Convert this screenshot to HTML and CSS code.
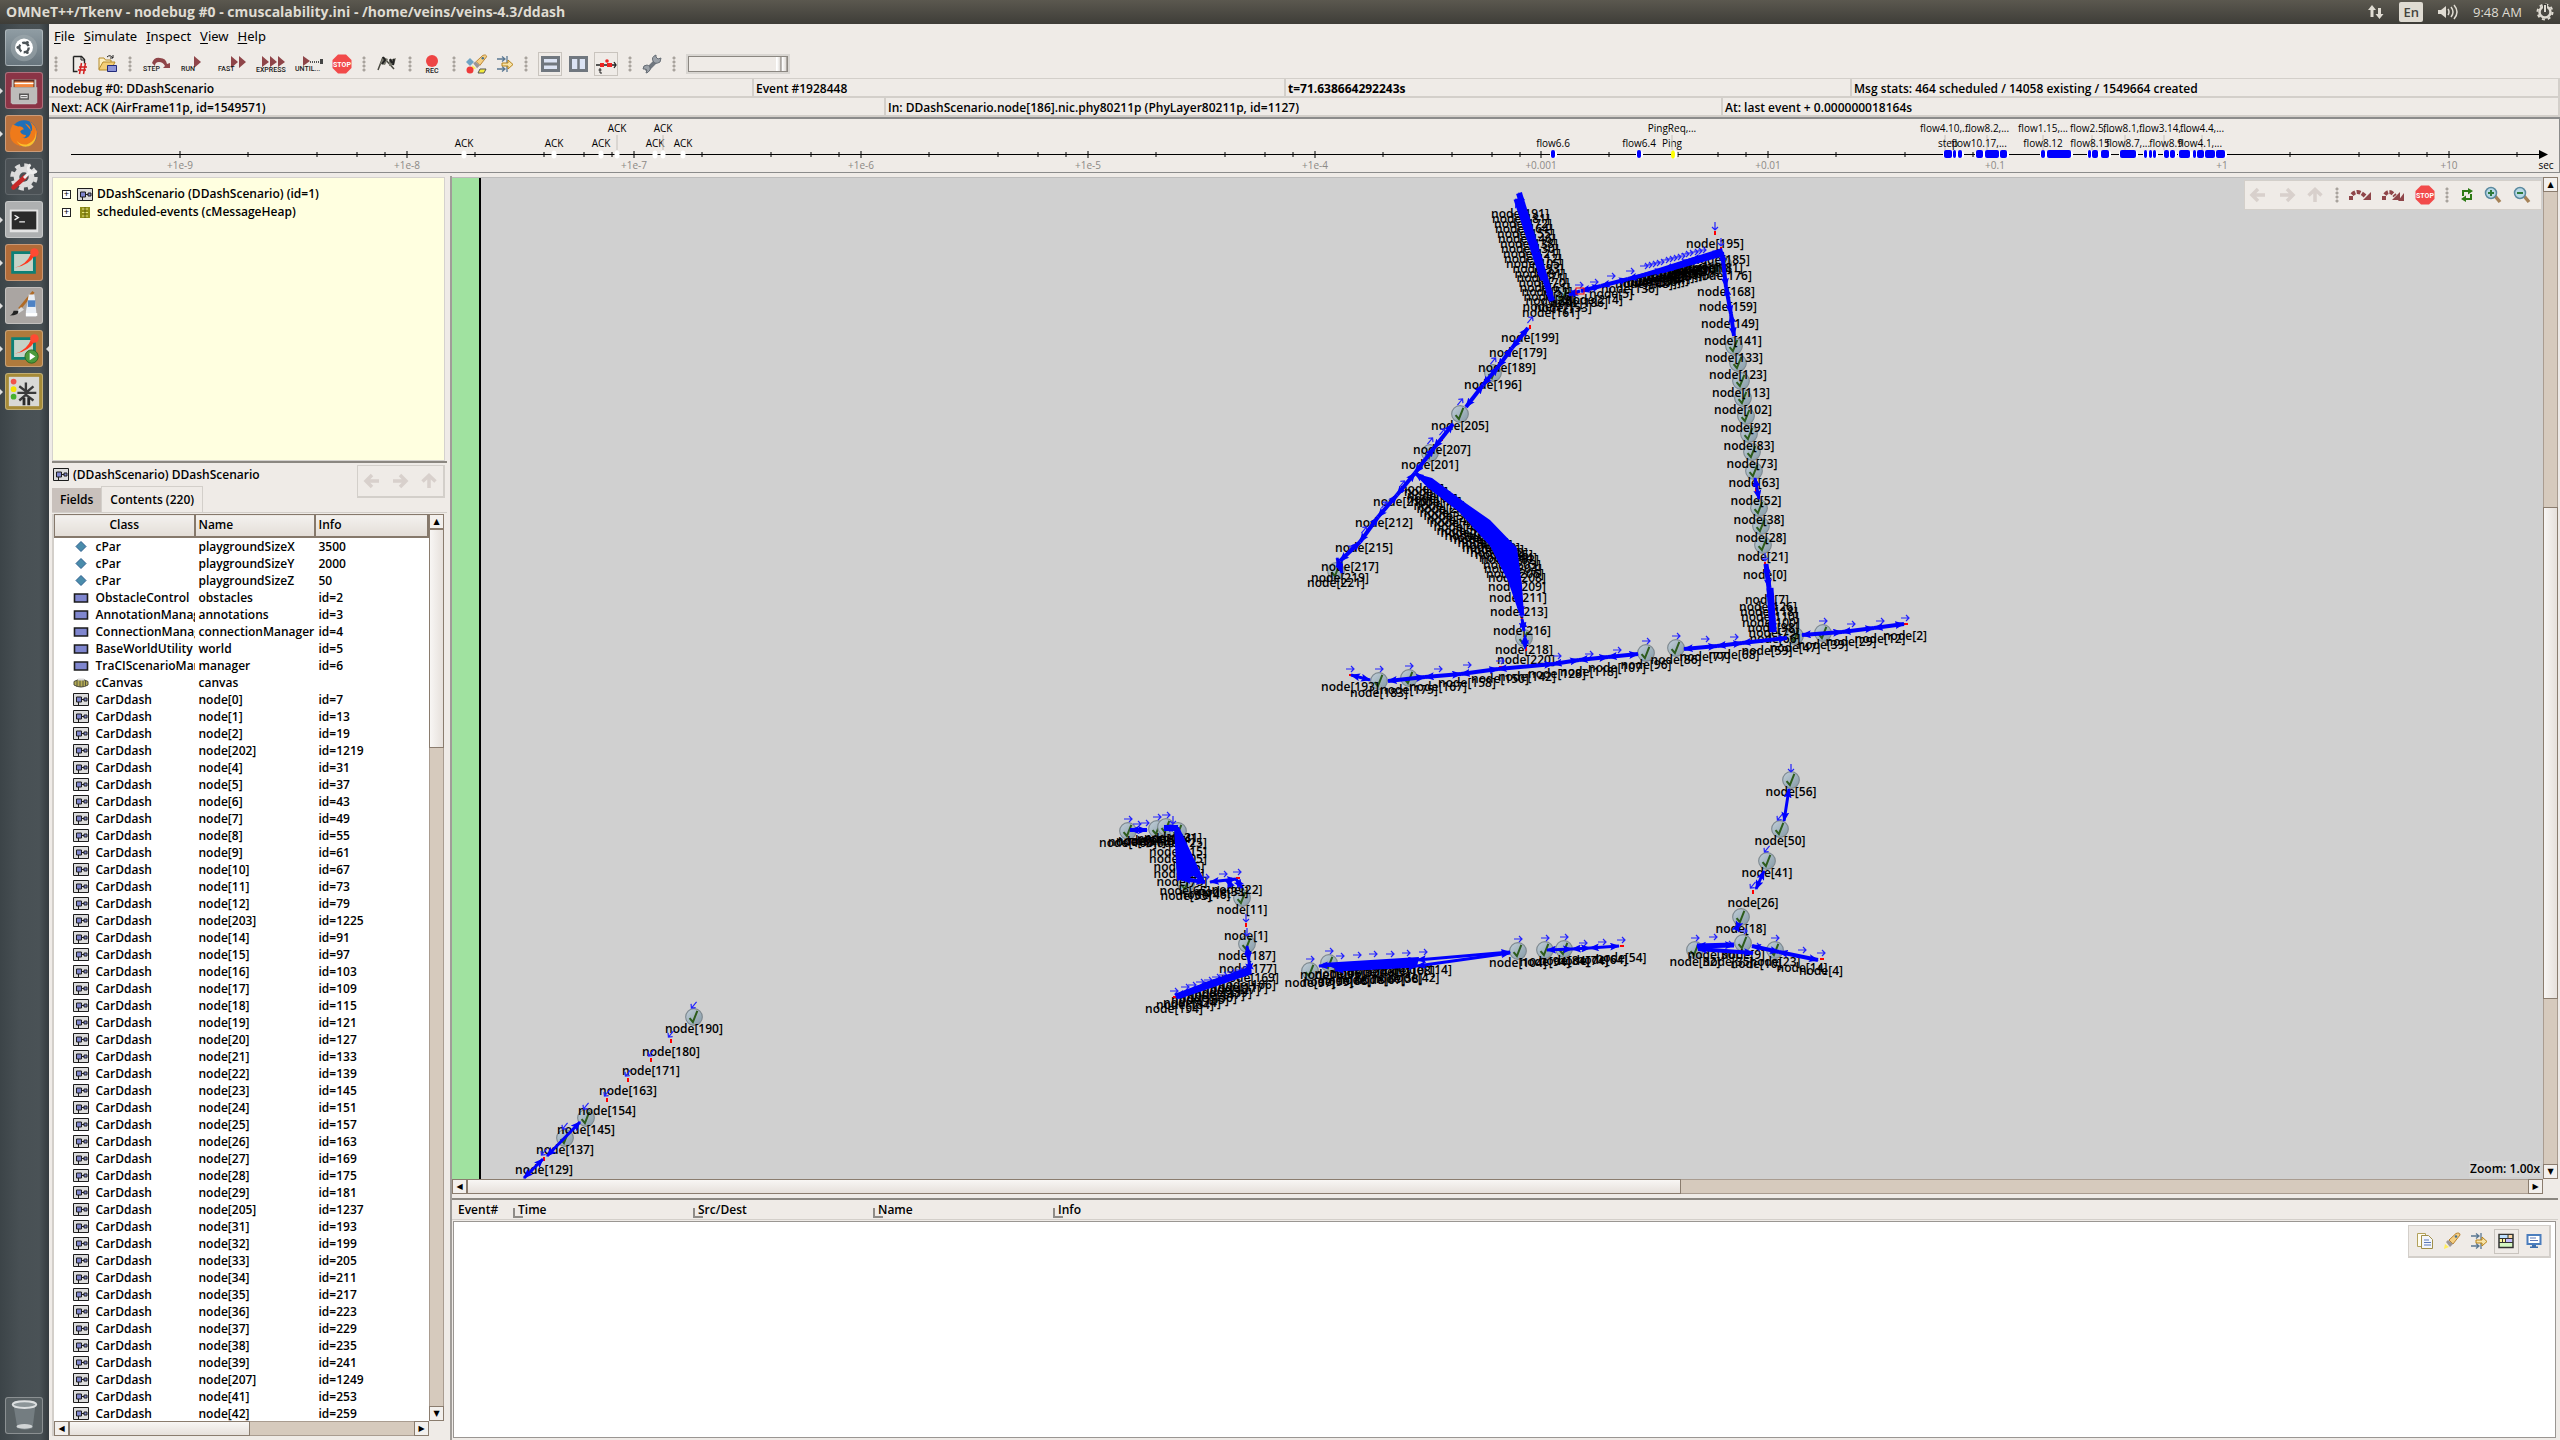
FILE: index.html
```html
<!DOCTYPE html>
<html lang="en">
<head>
<meta charset="utf-8">
<title>OMNeT++/Tkenv - nodebug #0</title>
<link rel="stylesheet" href="styles.css">
</head>
<body>
<svg class="defs" aria-hidden="true">
  <defs>
    <marker id="head" viewBox="0 0 10 8" refX="9" refY="4" markerWidth="10" markerHeight="8" markerUnits="userSpaceOnUse" orient="auto-start-reverse"><path d="M0 0L10 4L0 8L2 4Z" fill="#00f"/></marker>
    <linearGradient id="ball" x1="0" y1="0" x2="1" y2="1"><stop offset="0" stop-color="#c3d0da"/><stop offset="1" stop-color="#8499a5"/></linearGradient>
    <symbol id="check" viewBox="0 0 18 18"><circle cx="9" cy="9" r="7.500" fill="url(#ball)" stroke="#7d888f"/><path d="M5 10L8 13.500L12 3.500" fill="none" stroke="#2d5c1c" stroke-width="1.800"/></symbol>
    <symbol id="compound" viewBox="0 0 16 13"><path d="M.5.5h15v12h-15z" fill="#dcdcdc" stroke="#1c1c1c"/><path d="M3.500 4h5v5h-5zM11 5h3v3h-3zM8.500 6.500H11M5.500 9v3" fill="#7f86cf" stroke="#1c1c1c"/></symbol>
    <symbol id="simple" viewBox="0 0 16 13"><path d="M1.500 3h13v8h-13z" fill="#7f86cf" stroke="#1c1c1c" stroke-width="1.600"/></symbol>
    <symbol id="param" viewBox="0 0 16 13"><path d="M8 1.500L13 6.500L8 11.500L3 6.500Z" fill="#4a8cab" stroke="#2d5f8f"/></symbol>
    <symbol id="canvas-icon" viewBox="0 0 16 13"><path d="M1 5.500Q8 1.500 15 5.500V9Q8 13 1 9Z" fill="#b5ac55" stroke="#4a4a3a"/><path d="M4 5v6M7 4v7M10 4v7M12.500 5v5" stroke="#55553f"/><path d="M5 3.500h6" stroke="#ddd" stroke-width="2"/></symbol>
    <symbol id="heap" viewBox="0 0 16 13"><path d="M3 1h10v11H3z" fill="#8f8d16"/><path d="M5 3h6M5 6.500h6M5 10h6" stroke="#e6e57d"/><path d="M8 1v11" stroke="#5d5c10"/></symbol>
    <symbol id="left" viewBox="0 0 18 16"><path d="M9 2L3 8L9 14M3.500 8H16" fill="none" stroke="#d8d0cc" stroke-width="3.500"/></symbol>
    <symbol id="right" viewBox="0 0 18 16"><path d="M9 2L15 8L9 14M14.500 8H2" fill="none" stroke="#d8d0cc" stroke-width="3.500"/></symbol>
    <symbol id="up" viewBox="0 0 18 16"><path d="M2.500 8.500L9 2.500L15.500 8.500M9 3V15" fill="none" stroke="#d8d0cc" stroke-width="3.500"/></symbol>
    <symbol id="stop" viewBox="0 0 20 20"><path d="M6 .5h8L19.500 6v8L14 19.500H6L.5 14V6Z" fill="#f24a4a"/><text x="10" y="12.500" class="tiny stop-text">STOP</text></symbol>
    <symbol id="join" viewBox="0 0 18 18"><path d="M1 4h8M6 1.500L9 4L6 6.500M1 14h8M6 11.500L9 14L6 16.500M11 1v16" fill="none" stroke="#5a7892" stroke-width="1.300"/><path d="M6 8h6V5l5 4.500L12 14v-3H6Z" fill="#f6e3a8" stroke="#b98317"/></symbol>
    <symbol id="rocket" viewBox="0 0 18 18"><path d="M6 8L13 1.500Q17 0 17 3L10 12Z" fill="#f4cf83" stroke="#b98330"/><path d="M5 8L10 12L7 15L3 10Z" fill="#9b9696"/><path d="M1 17L2 12L6 15Z" fill="#ffee5c"/><circle cx="13" cy="4.500" r="1.300" fill="#49708c"/></symbol>
    <symbol id="omnet" viewBox="0 0 38 37"><path d="M7 8h23v21H7z" fill="#c5d3c8" stroke="#0d8076" stroke-width="3"/><path d="M9 24Q22 21 27 8L31 10Q24 22 9 24Z" fill="#ff3a1f"/><circle cx="30" cy="8" r="4.500" fill="#ff4a32"/></symbol>
  </defs>
</svg>

<header class="panel-bar">
  <span class="panel-title">OMNeT++/Tkenv - nodebug #0 - cmuscalability.ini - /home/veins/veins-4.3/ddash</span>
  <div class="indicators">
    <svg width="18" height="18" viewBox="0 0 18 18"><path d="M5 2L9 7H6.500V14H3.500V7H1ZM12.500 16L8.500 11H11V5H14V11H16.500Z" fill="#dfdbd2"/></svg>
    <span class="lang">En</span>
    <svg width="22" height="18" viewBox="0 0 22 18"><path d="M1 7h3l5-4v12l-5-4H1Z" fill="#dfdbd2"/><path d="M11 6q2 3 0 6M14 4q4 5 0 10M17 2q6 7 0 14" fill="none" stroke="#dfdbd2" stroke-width="1.500"/></svg>
    <span class="clock">9:48 AM</span>
    <svg width="18" height="18" viewBox="0 0 18 18"><circle cx="9" cy="9" r="5.500" fill="none" stroke="#dfdbd2" stroke-width="2.500"/><circle cx="9" cy="9" r="7.500" fill="none" stroke="#dfdbd2" stroke-width="2" stroke-dasharray="3 2.900"/><path d="M9 1v8" stroke="#3f3e39" stroke-width="4"/><path d="M9 2v7" stroke="#dfdbd2" stroke-width="2"/></svg>
  </div>
</header>

<div class="desktop">
  <nav class="launcher" aria-label="Launcher">
    <button class="tile dash" aria-label="Dash"><svg viewBox="0 0 38 37"><circle cx="19" cy="19" r="14" fill="#a3adb2" opacity=".5"/><circle cx="19" cy="18.500" r="9.500" fill="#fff"/><circle cx="19" cy="18.500" r="5" fill="none" stroke="#4d5458" stroke-width="2.500" stroke-dasharray="8 2.500"/><circle cx="12.500" cy="18.500" r="1.500" fill="#4d5458"/><circle cx="22.500" cy="13" r="1.500" fill="#4d5458"/><circle cx="22.500" cy="24" r="1.500" fill="#4d5458"/></svg></button>
    <button class="tile files running" aria-label="Files"><svg viewBox="0 0 38 37"><path d="M6 7h26v25q0 1-1 1H7q-1 0-1-1Z" fill="#c5c4c2"/><path d="M8 7h22v9H8z" fill="#5c2e24"/><path d="M9 9h20v6H9z" fill="#f2843b"/><path d="M9 11h20" stroke="#fff" stroke-width="1.500"/><path d="M5 15h28v17H5z" fill="#bdbcba"/><path d="M14.500 22.500h9v5h-9z" fill="#eee" stroke="#555" stroke-width="1.500"/><path d="M16 25h6" stroke="#555"/></svg></button>
    <button class="tile firefox running" aria-label="Firefox"><svg viewBox="0 0 38 37"><circle cx="19" cy="18.500" r="14" fill="#1f6fb8"/><path d="M20 8q7 2 6 10q-2 7-9 5q4 0 4-3q-5 0-6-4q2-2 4-2q-2-4-6-3L7 9Q2 18 6 26q6 8 16 6q11-3 11-15q-2-8-8-11q4 5 2 10Z" fill="#ef7a1a"/><path d="M31 14q2 12-9 16q-7 1-11-4q4 8 13 6q10-4 7-18Z" fill="#fbc02d"/></svg></button>
    <button class="tile settings" aria-label="System Settings"><svg viewBox="0 0 38 37"><circle cx="19" cy="19" r="11" fill="#dcdcdc"/><circle cx="19" cy="19" r="12.500" fill="none" stroke="#dcdcdc" stroke-width="4" stroke-dasharray="5.500 4.300"/><circle cx="19" cy="19" r="5" fill="#4b5054"/><path d="M8 30L20 19" stroke="#c62828" stroke-width="5" stroke-linecap="round"/><path d="M19 20L27 12" stroke="#eee" stroke-width="3"/><path d="M26 6a4.500 4.500 0 1 0 6 6" fill="none" stroke="#eee" stroke-width="3"/></svg></button>
    <button class="tile terminal running" aria-label="Terminal"><svg viewBox="0 0 38 37"><path d="M4 8h30v24H4z" fill="#e4e4e4"/><path d="M6 10h26v19H6z" fill="#2b2b2b"/><path d="M9 14l4 2.500l-4 2.500M14 21h6" fill="none" stroke="#eee" stroke-width="1.500"/></svg></button>
    <button class="tile omnet running" aria-label="OMNeT++ IDE"><svg viewBox="0 0 38 37"><use href="#omnet"/></svg></button>
    <button class="tile paint running" aria-label="Paint"><svg viewBox="0 0 38 37"><path d="M29 4L14 22" stroke="#b06a26" stroke-width="3"/><path d="M16 20l3 3l-6 4l-1-3Z" fill="#ddd"/><path d="M4 29q3-1 4-5l5 0q1 5-9 5Z" fill="#222"/><path d="M24 7h6l2 18v5H21v-5Z" fill="#e9eef5"/><path d="M23 13h8v7h-8z" fill="#4e82c4"/><path d="M21 28h12" stroke="#fff" stroke-width="3"/></svg></button>
    <button class="tile tkenv running active" aria-label="Tkenv"><svg viewBox="0 0 38 37"><use href="#omnet"/><circle cx="27" cy="27" r="7" fill="#4c9a3c" stroke="#2b6a22"/><path d="M25 23l6 4l-6 4Z" fill="#fff"/></svg></button>
    <button class="tile sumo running" aria-label="SUMO"><svg viewBox="0 0 38 37"><path d="M3 3h32v31H3z" fill="#d9d9d6"/><path d="M14 13l8 6l7-6M21 9v14M12 20h20M14 28l7-6l8 6" fill="none" stroke="#3a3a3a" stroke-width="2.500"/><path d="M19 25v8M24 25v8" stroke="#2a2a2a" stroke-width="3"/><circle cx="8" cy="8" r="3" fill="#f0544c"/><circle cx="8" cy="16" r="3" fill="#f2e205"/><circle cx="8" cy="24" r="3" fill="#47b02f"/></svg></button>
    <button class="tile trash" aria-label="Trash"><svg viewBox="0 0 38 37"><path d="M8 8h23l-3 24q-8 3-16 0Z" fill="#7b8588" opacity=".8"/><ellipse cx="19.500" cy="7" rx="12.500" ry="3.500" fill="#8c9598" stroke="#dcdfe0" stroke-width="2"/><ellipse cx="19.500" cy="30" rx="8.500" ry="2.500" fill="#d0d4d5"/></svg></button>
  </nav>

  <main class="window">
    <nav class="menu">
      <button><u>F</u>ile</button><button><u>S</u>imulate</button><button><u>I</u>nspect</button><button><u>V</u>iew</button><button><u>H</u>elp</button>
    </nav>

    <div class="toolbar">
      <i class="grip"></i>
      <button aria-label="Set up run"><svg width="22" height="24" viewBox="0 0 22 24"><path d="M5.500 4.500h8l3 3v4M5.500 4.500v15h4" fill="none" stroke="#222" stroke-width="1.400"/><path d="M13 4v4h4" fill="none" stroke="#222"/><path d="M11 15h8M10 18h8M13.500 11l-2 11M17.500 11l-2 11" stroke="#d21f1f" stroke-width="1.500"/></svg></button>
      <button aria-label="Open"><svg width="20" height="24" viewBox="0 0 20 24"><path d="M1 17V6h5l1.500 2H13v3" fill="#fdf0c4" stroke="#b58a2b"/><path d="M1 17L5 10h12l-4 8H1Z" fill="#f3cf78" stroke="#b58a2b"/><path d="M9 5q3-3 6 1M15 3v3h-3" fill="none" stroke="#222"/><path d="M9.500 13.500h9v6h-9z" fill="#8c94d8" stroke="#222b7a"/></svg></button>
      <i class="grip"></i>
      <button aria-label="Step"><svg width="30" height="24" viewBox="0 0 30 24"><path d="M10 11q2-6 8-5q6 0 7 6l3-1v5h-7l2-2q-2-4-6-4q-4 0-4 4Z" fill="#8f4549"/><text x="1" y="19" class="tiny">STEP</text></svg></button>
      <button aria-label="Run"><svg width="24" height="24" viewBox="0 0 24 24"><path d="M14 4l7 6l-7 6z" fill="#8f4549"/><text x="1" y="19" class="tiny">RUN</text></svg></button>
      <button aria-label="Fast"><svg width="34" height="24" viewBox="0 0 34 24"><path d="M19 4l7 6l-7 6zM27 4l7 6l-7 6z" fill="#8f4549"/><text x="6" y="19" class="tiny">FAST</text></svg></button>
      <button aria-label="Express"><svg width="32" height="24" viewBox="0 0 32 24"><path d="M8 4l7 6l-7 5zM16 4l7 6l-7 5zM24 4l7 6l-7 5z" fill="#8f4549"/><text x="2" y="20" class="tiny">EXPRESS</text></svg></button>
      <button aria-label="Until"><svg width="30" height="24" viewBox="0 0 30 24"><path d="M9 4l7 5l-7 5z" fill="#8f4549"/><path d="M16 10h10" stroke="#555" stroke-dasharray="1 1" stroke-width="2"/><path d="M26 7h3v5h-3z" fill="#444"/><text x="1" y="19" class="tiny">UNTIL...</text></svg></button>
      <button aria-label="Stop"><svg width="20" height="20"><use href="#stop"/></svg></button>
      <i class="grip"></i>
      <button aria-label="Finish"><svg width="22" height="20" viewBox="0 0 22 20"><path d="M2 16L7 3M18 15L9 5" stroke="#4a4a42" stroke-width="1.500"/><path d="M7 3l5 2l-3 6l-5-1zM13 6l7-2l-2 7l-5 1z" fill="#77776c"/><path d="M7 3l2 3l-3 4M14 5l2 4M18 5l-1 6" stroke="#222" stroke-width="2" fill="none"/></svg></button>
      <i class="grip"></i>
      <button aria-label="Record"><svg width="20" height="24" viewBox="0 0 20 24"><circle cx="10" cy="9" r="6" fill="#ee4444"/><text x="10" y="21" class="tiny centered">REC</text></svg></button>
      <i class="grip"></i>
      <button aria-label="Filter events"><svg width="22" height="20" viewBox="0 0 22 20"><path d="M4 4l4 4l-4 4l-4-4Z" fill="#6fa3c4"/><use href="#rocket" x="4" y="0" width="18" height="17"/><circle cx="4" cy="16" r="3.500" fill="#ee3b3b"/><path d="M12 19l2-4h6l-2 4Z" fill="#f4ec3c" stroke="#555"/></svg></button>
      <button aria-label="Message animation"><svg width="18" height="18"><use href="#join"/></svg></button>
      <i class="grip"></i>
      <div class="toggles">
        <button class="pressed" aria-label="Horizontal layout"><svg width="19" height="16" viewBox="0 0 19 16"><path d="M1.500 1.500h16v13h-16z" fill="#dbe3f4" stroke="#70777f" stroke-width="3"/><path d="M1 8h17" stroke="#70777f" stroke-width="3"/></svg></button>
        <button aria-label="Vertical layout"><svg width="19" height="16" viewBox="0 0 19 16"><path d="M1.500 1.500h16v13h-16z" fill="#dbe3f4" stroke="#70777f" stroke-width="3"/><path d="M9.500 1v14" stroke="#70777f" stroke-width="2.500"/></svg></button>
        <button class="pressed" aria-label="Show timeline"><svg width="21" height="20" viewBox="0 0 21 20"><path d="M0 11h20M18 8l2 3l-2 3" stroke="#222" fill="none" stroke-width="1.300"/><path d="M4 11h4M11 11h5" stroke="#e22" stroke-width="4"/><circle cx="11" cy="7" r="1.800" fill="#e22"/><path d="M4 14v5h2M2.500 16h3" stroke="#222" fill="none"/></svg></button>
      </div>
      <i class="grip"></i>
      <button aria-label="Preferences"><svg width="20" height="20" viewBox="0 0 20 20"><path d="M4 17L15 6" stroke="#70777f" stroke-width="4"/><path d="M14 1q-5 2-3 6q2 4 7 1l1-4l-3 1l-2-2zM1 15q0-4 4-4q4 1 3 5q-2 3-4 3l1-3l-2-1z" fill="#9ba1a8" stroke="#666d75"/></svg></button>
      <i class="grip"></i>
      <input class="speed" type="range" min="0" max="100" value="100" aria-label="Animation speed">
    </div>

    <section class="status first"><span>nodebug #0: DDashScenario</span><span>Event #1928448</span><span class="time">t=71.638664292243s</span><span>Msg stats: 464 scheduled / 14058 existing / 1549664 created</span></section>
    <section class="status second"><span>Next: ACK (AirFrame11p, id=1549571)</span><span>In: DDashScenario.node[186].nic.phy80211p (PhyLayer80211p, id=1127)</span><span>At: last event + 0.000000018164s</span></section>

    <section class="timeline"><svg id="timeline" aria-label="Future events"></svg></section>

    <div class="work">
      <aside class="side">
        <ul class="tree">
          <li><b>+</b><svg width="16" height="13"><use href="#compound"/></svg><span>DDashScenario (DDashScenario) (id=1)</span></li>
          <li><b>+</b><svg width="16" height="13"><use href="#heap"/></svg><span>scheduled-events (cMessageHeap)</span></li>
        </ul>
        <section class="inspector">
          <div class="inspector-head">
            <div>
              <h2><svg width="16" height="13"><use href="#compound"/></svg>(DDashScenario) DDashScenario</h2>
              <div class="tabs"><button>Fields</button><button class="current">Contents (220)</button></div>
            </div>
            <div class="history">
              <button aria-label="Back"><svg width="18" height="16"><use href="#left"/></svg></button>
              <button aria-label="Forward"><svg width="18" height="16"><use href="#right"/></svg></button>
              <button aria-label="Parent"><svg width="18" height="16"><use href="#up"/></svg></button>
            </div>
          </div>
          <div class="scroller">
            <div class="viewport">
              <table class="contents">
                <thead><tr><th class="c-class">Class</th><th class="c-name">Name</th><th>Info</th></tr></thead>
                <tbody id="contents"></tbody>
              </table>
            </div>
            <div class="vbar"><button aria-label="Up">▲</button><i class="thumb list-v"></i><button aria-label="Down">▼</button></div>
            <div class="hbar"><button aria-label="Left">◀</button><i class="thumb list-h"></i><button aria-label="Right">▶</button></div>
          </div>
        </section>
      </aside>

      <div class="views">
        <div class="scroller">
          <div class="viewport network">
            <svg id="network" aria-label="Network DDashScenario"></svg>
            <div class="floatbar canvas-tools">
              <button aria-label="Back"><svg width="18" height="16"><use href="#left"/></svg></button>
              <button aria-label="Forward"><svg width="18" height="16"><use href="#right"/></svg></button>
              <button aria-label="Parent"><svg width="18" height="16"><use href="#up"/></svg></button>
              <i class="grip"></i>
              <button aria-label="Run until next event here"><svg width="22" height="12" viewBox="0 0 22 12"><path d="M2 11V7q6-8 14 0" fill="none" stroke="#8f4549" stroke-width="4" stroke-dasharray="4 1.500"/><path d="M22 3v8h-8Z" fill="#8f4549"/></svg></button>
              <button aria-label="Fast run until next event here"><svg width="22" height="12" viewBox="0 0 22 12"><path d="M2 11V7q5-8 11 0" fill="none" stroke="#8f4549" stroke-width="4" stroke-dasharray="4 1.500"/><path d="M18 3v8h-8ZM22 4v8h-6Z" fill="#8f4549"/></svg></button>
              <button aria-label="Stop"><svg width="20" height="20"><use href="#stop"/></svg></button>
              <i class="grip"></i>
              <button aria-label="Re-layout"><svg width="14" height="14" viewBox="0 0 14 14"><path d="M3 8V3h6M11 6v5H5" fill="none" stroke="#2d7a14" stroke-width="2"/><path d="M8 0l5 3l-5 3.500ZM6 7.500l-5 3.500l5 3Z" fill="#2d7a14"/></svg></button>
              <button aria-label="Zoom in"><svg width="18" height="18" viewBox="0 0 18 18"><path d="M11 10l5 6" stroke="#a58258" stroke-width="3.500"/><circle cx="7" cy="7" r="5.500" fill="#b9d9e6" stroke="#5b8aa0" stroke-width="1.500"/><path d="M7 4v6M4 7h6" stroke="#2d7a3c" stroke-width="2"/></svg></button>
              <button aria-label="Zoom out"><svg width="18" height="18" viewBox="0 0 18 18"><path d="M11 10l5 6" stroke="#a58258" stroke-width="3.500"/><circle cx="7" cy="7" r="5.500" fill="#b9d9e6" stroke="#5b8aa0" stroke-width="1.500"/><path d="M4 7h6" stroke="#2d7a3c" stroke-width="2"/></svg></button>
            </div>
            <span class="zoom">Zoom: 1.00x</span>
          </div>
          <div class="vbar"><button aria-label="Up">▲</button><i class="thumb net-v"></i><button aria-label="Down">▼</button></div>
          <div class="hbar"><button aria-label="Left">◀</button><i class="thumb net-h"></i><button aria-label="Right">▶</button></div>
        </div>
        <section class="log">
          <div class="log-head"><span>Event#</span><span>Time</span><span>Src/Dest</span><span>Name</span><span>Info</span></div>
          <div class="log-body">
            <div class="floatbar log-tools">
              <button aria-label="Copy"><svg width="18" height="18" viewBox="0 0 18 18"><path d="M1.500 1.500h8v13h-8z" fill="#fffdf0" stroke="#b3a25c"/><path d="M5.500 3.500h7l4 4v9h-11z" fill="#f3f6fb" stroke="#a08f4a"/><path d="M8 8h5M8 10.500h7M8 13h7" stroke="#5b78b8"/></svg></button>
              <button aria-label="Find"><svg width="18" height="18"><use href="#rocket"/></svg></button>
              <button aria-label="Filter"><svg width="18" height="18"><use href="#join"/></svg></button>
              <button class="pressed" aria-label="Messages view"><svg width="16" height="16" viewBox="0 0 16 16"><path d="M1 1.500h14v13H1z" fill="#d5f7c2" stroke="#333" stroke-width="1.500"/><path d="M2 2h8v3H2z" fill="#bfe0ff"/><path d="M10.500 2H14v3h-3.500z" fill="#ffd9a8"/><path d="M8 6h6v3H8z" fill="#c6c0ff"/><path d="M2 6h6v3H2z" fill="#fdf6a0"/><path d="M1 5.500h14M1 9.500h14M10 1v4M4.500 6v3M7.500 6v3" stroke="#333"/></svg></button>
              <button aria-label="Log view"><svg width="16" height="16" viewBox="0 0 16 16"><path d="M1.500 2h13v9h-13z" fill="#fff" stroke="#4a7dbd" stroke-width="2"/><path d="M4 5h6M4 7.500h8" stroke="#5b78b8"/><path d="M6 12h4v1.500h2V15H4v-1.500h2z" fill="#3e6fae"/></svg></button>
            </div>
          </div>
        </section>
      </div>
    </div>
  </main>
</div>
<script src="script.js"></script>
</body>
</html>
```
FILE: styles.css
```css
* { box-sizing: border-box; }
body {
  margin: 0;
  height: 100vh;
  display: flex;
  flex-direction: column;
  overflow: hidden;
  background: #efebe7;
  color: #000;
  font: 600 12px/16px "Open Sans", "Noto Sans", sans-serif;
}
button {
  margin: 0;
  padding: 0;
  border: 0;
  background: none;
  color: inherit;
  font: inherit;
  display: flex;
  align-items: center;
  justify-content: center;
}
svg { display: block; flex: none; }
.defs { position: absolute; width: 0; height: 0; }
.tiny { font: 500 7px Roboto, sans-serif; fill: #1a1a1a; }
.tiny.centered { text-anchor: middle; }
.stop-text { fill: #fff; text-anchor: middle; font-weight: 700; }

/* desktop panel */
.panel-bar {
  flex: none;
  height: 24px;
  padding: 0 6px;
  display: flex;
  align-items: center;
  justify-content: space-between;
  background: linear-gradient(#5b584f, #3e3d38);
  color: #dfdbd2;
}
.panel-title { font-size: 14px; font-weight: 700; }
.indicators { display: flex; align-items: center; gap: 14px; }
.indicators .lang { padding: 2px 4px; border-radius: 2px; background: #dfdbd2; color: #45433d; font-size: 13px; }
.indicators .clock { font-size: 13px; font-weight: 400; }
.desktop { flex: 1; min-height: 0; display: flex; }

/* launcher */
.launcher {
  flex: none;
  width: 49px;
  padding: 5px 5px 6px;
  display: flex;
  flex-direction: column;
  gap: 6px;
  background: linear-gradient(90deg, #3c4448, #485054 40%, #4a5256 80%, #343a3e);
}
.tile { position: relative; width: 38px; height: 37px; border-radius: 3px; border: 1px solid rgba(255,255,255,.3); }
.tile svg { width: 36px; height: 35px; }
.dash { background: linear-gradient(#8f9ca3, #68757d); }
.files { background: #8b3446; }
.firefox { background: #b8723f; }
.settings { background: #4b5155; border-color: #62686c; }
.terminal { background: #aeb0b1; }
.omnet { background: #b26c39; }
.paint { background: #aaa5a2; }
.tkenv { background: #b07a3c; }
.sumo { background: #a68b38; }
.trash { margin-top: auto; background: #596164; }
.running::before, .active::after {
  content: "";
  position: absolute;
  top: 15px;
  left: -6px;
  border: 3px solid transparent;
  border-left-color: #dfdfdf;
  border-right-width: 0;
}
.active::after { left: 40px; border: 3px solid transparent; border-right-color: #dfdfdf; border-left-width: 0; }

/* application window */
.window { flex: 1; min-width: 0; display: flex; flex-direction: column; }
.menu { flex: none; height: 26px; padding: 0 5px 2px; display: flex; align-items: center; gap: 9px; font-size: 13px; font-weight: 400; font-family: "Noto Sans", sans-serif; }
.menu u { text-underline-offset: 2px; }
.toolbar { flex: none; height: 29px; padding: 0 3px; display: flex; align-items: center; gap: 8px; border-bottom: 1px solid #d3cfca; }
.grip { flex: none; width: 4px; height: 16px; margin: 0 2px; background: radial-gradient(circle at 2px 2px, #a8a39d 1px, transparent 2px) 0 0 / 4px 4px; }
.toggles { display: flex; align-items: center; gap: 4px; }
.toggles button { width: 24px; height: 24px; }
.pressed { border: 1px solid #c9c4be; }
.speed { appearance: none; width: 104px; height: 20px; margin: 0; padding: 0; border: 2px solid #d9d6d2; outline: 1px solid #8b8781; outline-offset: -3px; background: #efebe7; }
.speed::-webkit-slider-thumb { appearance: none; width: 12px; height: 14px; background: linear-gradient(90deg, #fff 1px, #e0dcd8 4px, #77726c 5px, #fff 6px, #e0dcd8 10px, #77726c 11px); }

.status { flex: none; height: 19px; display: grid; border-bottom: 2px solid #d3cfca; line-height: 19px; }
.first { grid-template-columns: 705fr 532fr 566fr 708fr; }
.second { grid-template-columns: 1fr 1fr 1fr; }
.status span { padding-left: 2px; border-right: 2px solid #d3cfca; white-space: nowrap; }
.time { font-weight: 700; }

.timeline { flex: none; height: 56px; margin-bottom: 3px; border: 1px solid #8b8b8b; border-width: 2px 1px 1px 0; }
.timeline svg { width: 100%; height: 53px; font-size: 10px; font-weight: 400; }
.timeline .stamp { fill: #8c8985; }

.work { flex: 1; min-height: 0; display: grid; grid-template-columns: 403px 1fr; }

/* left column */
.side { min-height: 0; padding: 1px 3px 4px; display: grid; grid-template-rows: 284px 1fr; border-right: 2px solid #a19d99; }
.tree { margin: 0 2px 0 0; padding: 7px 9px; list-style: none; background: #ffffe0; border: 1px solid #d5d2ce; }
.tree li { height: 18px; display: flex; align-items: center; gap: 4px; }
.tree svg { margin-left: 2px; }
.tree b { width: 9px; height: 9px; border: 1px solid #222; background: #fff; font: 9px/7px "Liberation Sans", sans-serif; text-align: center; }
.inspector { min-height: 0; display: flex; flex-direction: column; border-top: 2px solid #8b8781; }
.inspector-head { flex: none; display: flex; justify-content: space-between; align-items: flex-start; border-bottom: 1px solid #d3cfca; }
.inspector h2 { margin: 0; height: 23px; padding-left: 1px; display: flex; align-items: center; gap: 4px; font: inherit; }
.tabs { display: flex; align-items: flex-end; }
.tabs button { height: 24px; padding: 0 8px; background: #c9c1bc; }
.tabs .current { height: 26px; background: #efebe7; border: 1px solid #d3cfca; border-bottom: 0; }
.history { width: 88px; height: 33px; margin: 2px 2px 0 0; display: flex; align-items: center; justify-content: space-around; border: 2px solid #d3cfca; border-width: 1px 2px 2px 1px; }

/* scrolled areas */
.scroller { flex: 1; min-height: 0; display: grid; grid-template: minmax(0, 1fr) 15px / minmax(0, 1fr) 15px; }
.viewport { position: relative; overflow: hidden; background: #fff; }
.vbar, .hbar { display: flex; background: #d6cabd; border: 1px solid #a99c90; }
.vbar { flex-direction: column; justify-content: space-between; }
.hbar { justify-content: space-between; }
.vbar button, .hbar button { flex: none; width: 13px; height: 13px; background: #f3f0ed; outline: 1px solid #8a7c6e; font: 8px/8px "DejaVu Sans", sans-serif; }
.thumb { background: linear-gradient(90deg, #f8f6f4, #e6e0db); outline: 1px solid #8a7c6e; }
.hbar .thumb { background: linear-gradient(#f8f6f4, #e6e0db); }
.list-v { height: 24%; margin: 2px 0 auto; }
.list-h { width: 48%; margin: 0 auto 0 2px; }
.net-v { height: 49%; margin: auto 0 167px; }
.net-h { width: 58%; margin: 0 auto 0 2px; }

.inspector .scroller { margin: 1px 3px 0 0; border-left: 2px solid #d3cfca; }
.contents { width: 100%; table-layout: fixed; border-collapse: collapse; }
.contents th { height: 22px; padding: 0 3px; text-align: left; font-weight: 600; background: linear-gradient(#f3f1ee, #e3ddd7); border: 1px solid #85786b; border-width: 1px 2px 2px 1px; }
.contents .c-class { width: 140px; text-align: center; }
.contents .c-name { width: 120px; }
.contents td { height: 17px; padding: 0 0 0 4px; line-height: 17px; white-space: nowrap; overflow: hidden; }
.contents td:first-child { padding-left: 18px; }
.contents td div { display: flex; align-items: center; gap: 7px; }

/* right column */
.views { min-width: 0; min-height: 0; padding: 1px 2px 2px 0; display: flex; flex-direction: column; }
.network { background: #d0d0d0; border-top: 1px solid #bbb; }
#network { width: 100%; height: 100%; font-size: 12px; text-anchor: middle; }
.floatbar { position: absolute; display: flex; align-items: center; background: #efebe7; border: 1px solid #d3cfca; }
.canvas-tools { top: 2px; right: 1px; width: 298px; height: 30px; padding: 0 10px 0 4px; justify-content: space-between; }
.canvas-tools .grip { margin: 0; }
.log-tools { top: 3px; right: 4px; width: 143px; height: 33px; padding: 0 3px; justify-content: space-between; border-width: 1px 2px 2px 1px; }
.log-tools button { width: 25px; height: 25px; }
.zoom { position: absolute; right: 2px; bottom: 2px; padding: 0 1px; background: #d5d5d5; }
.log { flex: none; height: 19%; min-height: 120px; margin-top: 4px; display: flex; flex-direction: column; border-top: 2px solid #8b8781; }
.log-head { flex: none; height: 20px; display: grid; grid-template-columns: 60px 180px 180px 180px 1fr; align-items: center; border-bottom: 1px solid #d3cfca; }
.log-head span { position: relative; padding-left: 6px; }
.log-head span + span::before { content: ""; position: absolute; left: 1px; bottom: 0; width: 8px; height: 8px; border: 2px solid #8f8c88; border-width: 0 0 2px 2px; }
.log-body { position: relative; flex: 1; margin: 1px 2px 0 1px; background: #fff; border: 1px solid #9a9692; }
```
FILE: script.js
```js
const NS = 'http://www.w3.org/2000/svg';

function draw(parent, tag, attrs, text) {
  const el = document.createElementNS(NS, tag);
  for (const key in attrs) el.setAttribute(key, attrs[key]);
  if (text) el.textContent = text;
  parent.append(el);
  return el;
}

/* ---- contents table ---- */
const rows = [
  ['param', 'cPar', 'playgroundSizeX', '3500'],
  ['param', 'cPar', 'playgroundSizeY', '2000'],
  ['param', 'cPar', 'playgroundSizeZ', '50'],
  ['simple', 'ObstacleControl', 'obstacles', 'id=2'],
  ['simple', 'AnnotationManager', 'annotations', 'id=3'],
  ['simple', 'ConnectionManager', 'connectionManager', 'id=4'],
  ['simple', 'BaseWorldUtility', 'world', 'id=5'],
  ['simple', 'TraCIScenarioManager', 'manager', 'id=6'],
  ['canvas-icon', 'cCanvas', 'canvas', ''],
];
const respawned = { 3: [202, 1219], 13: [203, 1225], 30: [205, 1237], 40: [207, 1249] };
for (let i = 0; i <= 42; i++) {
  const [node, id] = respawned[i] || [i, 7 + 6 * i];
  rows.push(['compound', 'CarDdash', `node[${node}]`, `id=${id}`]);
}
document.getElementById('contents').innerHTML = rows.map(([icon, cls, name, info]) =>
  `<tr><td><div><svg width="16" height="13"><use href="#${icon}"/></svg>${cls}</div></td><td>${name}</td><td>${info}</td></tr>`).join('');

/* ---- timeline ---- */
const tl = document.getElementById('timeline');
const AXIS = 35;
draw(tl, 'line', { x1: 22, x2: 2492, y1: AXIS + .5, y2: AXIS + .5, stroke: '#000' });
draw(tl, 'path', { d: 'M2490 31L2499 35.5L2490 40Z' });
['+1e-9', '+1e-8', '+1e-7', '+1e-6', '+1e-5', '+1e-4', '+0.001', '+0.01', '+0.1', '+1', '+10'].forEach((stamp, i) => {
  const x = 131 + Math.round(i * 226.9);
  draw(tl, 'text', { x, y: 50, 'text-anchor': 'middle', class: 'stamp' }, stamp);
  draw(tl, 'line', { x1: x, x2: x, y1: 32, y2: 39, stroke: '#000' });
  [2, 4, 6, 8].forEach(m => {
    const mx = x + Math.round(Math.log10(m) * 226.9);
    if (mx < 2480) draw(tl, 'line', { x1: mx, x2: mx, y1: 33, y2: 38, stroke: '#000' });
  });
});
draw(tl, 'text', { x: 2497, y: 50, 'text-anchor': 'middle' }, 'sec');
[[415, 0, 'ACK'], [505, 0, 'ACK'], [552, 0, 'ACK'], [568, 1, 'ACK'], [606, 0, 'ACK'], [614, 1, 'ACK'], [634, 0, 'ACK'],
 [1504, 0, 'flow6.6'], [1590, 0, 'flow6.4'], [1623, 0, 'Ping'], [1623, 1, 'PingReq,...'],
 [1896, 1, 'flow4.10,...'], [1938, 1, 'flow8.2,...'], [1994, 1, 'flow1.15,...'], [2043, 1, 'flow2.5,...'], [2076, 1, 'flow8.1,...'],
 [2115, 1, 'flow3.14,...'], [2153, 1, 'flow4.4,...'], [1899, 0, 'step'], [1930, 0, 'flow10.17,...'], [1994, 0, 'flow8.12'],
 [2041, 0, 'flow8.15'], [2079, 0, 'flow8.7,...'], [2117, 0, 'flow8.9'], [2151, 0, 'flow4.1,...'],
].forEach(([x, upper, name]) => {
  if (upper) draw(tl, 'line', { x1: x, x2: x, y1: 16, y2: 31, stroke: '#c4c0bb' });
  draw(tl, 'text', { x, y: upper ? 13 : 28, 'text-anchor': 'middle' }, name);
});
[415, 505, 552, 568, 606, 614, 634, 1626].forEach(x => draw(tl, 'ellipse', { cx: x, cy: 35.5, rx: 2.5, ry: 4, fill: '#fff' }));
draw(tl, 'ellipse', { cx: 1624, cy: 35.5, rx: 2, ry: 4, fill: '#ff0' });
[[1502, 4], [1588, 4], [1895, 8], [1904, 3], [1909, 4], [1927, 7], [1936, 14], [1951, 7], [1992, 4], [1998, 24], [2039, 3],
 [2043, 6], [2052, 8], [2071, 16], [2095, 3], [2100, 3], [2104, 3], [2115, 5], [2121, 5], [2130, 11], [2144, 3], [2148, 7], [2156, 10], [2167, 9],
].forEach(([x, w]) => {
  draw(tl, 'rect', { x: x - 1, y: 32, width: w + 3, height: 7, rx: 2, fill: '#fff' });
  draw(tl, 'rect', { x, y: 31, width: w, height: 8, rx: 2, fill: '#00f' });
});

/* ---- network ---- */
const net = document.getElementById('network');
draw(net, 'rect', { x: 0, y: 0, width: 27, height: '100%', fill: '#a0e2a0' });
draw(net, 'rect', { x: 27, y: 0, width: 2, height: '100%', fill: '#000' });

/* icons lie under the labels, and links over both */
const icons = draw(net, 'g', {});
const labels = draw(net, 'g', {});
const links = draw(net, 'g', {});

const ANGLE = { e: 0, ne: -50, s: 90, sw: 130, n: -90 };

function district(ox, oy, sx, sy) {
  const X = x => Math.round(ox + x * sx);
  const Y = y => Math.round(oy + y * sy);
  const self = {
    /* "id x y kind heading": kind c = check, r = red dot, h = label only */
    nodes(list) {
      list.trim().split(/\n/).forEach(line => {
        const [id, lx, ly, kind, dir] = line.trim().split(' ');
        const x = X(+lx), y = Y(+ly), ny = y - 12;
        if (kind === 'c') draw(icons, 'use', { href: '#check', x: x - 10, y: ny - 10, width: 20, height: 20 });
        if (kind === 'r') draw(links, 'rect', { x: x - 1, y: ny - 1, width: dir === 'e' ? 4 : 2, height: dir === 'e' ? 2 : 4, fill: '#f00' });
        if (dir) draw(links, 'path', {
          d: 'M-4 0H4M1 -3L4 0L1 3', fill: 'none', stroke: '#22f', 'stroke-width': 1.2,
          transform: `translate(${x} ${ny - (kind === 'c' ? 12 : 6)}) rotate(${ANGLE[dir]})`,
        });
        draw(labels, 'text', { x, y: y + 4 }, `node[${id}]`);
      });
      return self;
    },
    row(ids, x1, y1, x2, y2, dir) {
      const n = ids.length - 1;
      return self.nodes(ids.map((id, i) => `${id} ${x1 + (x2 - x1) * i / n} ${y1 + (y2 - y1) * i / n} h ${dir || ''}`.trim()).join('\n'));
    },
    /* two-way links between consecutive points */
    link(points, width = 3) {
      for (let i = 0; i + 3 < points.length; i += 2)
        draw(links, 'line', {
          x1: X(points[i]), y1: Y(points[i + 1]), x2: X(points[i + 2]), y2: Y(points[i + 3]),
          stroke: '#00f', 'stroke-width': width, 'marker-start': 'url(#head)', 'marker-end': 'url(#head)',
        });
      return self;
    },
    area(points) {
      const p = [];
      for (let i = 0; i < points.length; i += 2) p.push(X(points[i]) + ',' + Y(points[i + 1]));
      draw(links, 'polygon', { points: p.join(' '), fill: '#00f' });
      return self;
    },
  };
  return self;
}

district(828, 1, .4464, .3381)
  .row([191, 181, 172, 164, 155, 146, 138, 130, 121, 112, 105], 537, 104, 571, 252)
  .row([93, 81, 71, 70, 61, 51, 36, 25], 579, 267, 606, 362)
  .nodes(`153 635 382 c
    17 600 378 h
    161 608 396 h
    186 670 368 h e
    214 703 357 h e
    5 742 340 h e
    136 783 325 h e`)
  .row([148, 157, 166, 174, 184, 27, 20, 37, 49, 60, 72, 80, 90, 101, 111], 815, 312, 945, 262, 'e')
  .nodes(`195 975 191 r s
    181 972 262 h
    185 987 240 r s
    176 993 286 c
    168 998 333 h
    159 1004 380 h
    149 1009 428 h
    141 1015 478 h
    133 1018 528 c
    123 1027 579 c
    113 1033 632 c
    102 1038 683 c
    92 1044 736 c
    83 1050 789 c
    73 1057 842 c
    63 1061 898 c
    52 1066 951 r s
    38 1073 1008 c
    28 1077 1061 c
    21 1081 1117 c
    0 1087 1171 r s
    7 1091 1245 h
    199 561 469 r ne
    179 534 514 h
    189 508 558 h
    196 478 608 c ne
    205 404 730 c ne
    207 362 801 r ne
    201 337 845 c ne
    210 273 955 h ne
    212 234 1017 h ne
    215 189 1090 h ne
    217 156 1147 h ne
    219 135 1180 h
    221 126 1194 c`)
  .row([126, 118, 110, 100, 98, 79, 66], 1094, 1265, 1108, 1360)
  .row([3, 6, 8, 13, 16, 19, 24, 31, 34, 40, 44, 48], 319, 916, 400, 1028)
  .row([55, 62, 69, 74, 82, 89, 97, 103, 116, 122, 135, 144], 408, 1040, 510, 1120)
  .row([202, 203, 204, 206, 208], 516, 1128, 530, 1181)
  .nodes(`209 532 1206 h
    211 534 1239 h
    213 536 1282 h
    216 541 1336 r s
    218 546 1394 c
    220 550 1423 r
    193 157 1502 r e
    183 222 1519 c e
    175 290 1512 c e
    167 355 1503 h e
    158 420 1492 h e
    150 492 1479 r e
    142 553 1472 h
    128 620 1465 r e
    118 692 1458 h e
    107 756 1445 h e
    96 820 1436 c e
    86 887 1424 c e
    77 953 1415 h e
    68 1016 1409 h e
    59 1090 1397 h
    47 1153 1388 c
    39 1217 1377 c e
    29 1280 1368 h e
    12 1345 1362 h e
    2 1399 1353 r e`)
  .link([536, 40, 575, 215, 610, 362], 6)
  .link([529, 60, 590, 300], 5)
  .link([648, 342, 672, 332])
  .link([675, 331, 720, 316, 780, 296, 860, 268, 920, 240, 990, 215], 4)
  .area([800, 285, 990, 203, 995, 228, 860, 278])
  .link([990, 215, 1000, 320, 1010, 400, 1018, 465], 4)
  .link([556, 442, 520, 500, 488, 555, 455, 610, 416, 675], 4)
  .link([388, 724, 345, 795, 302, 870, 262, 935, 220, 1000, 180, 1075, 135, 1130], 4)
  .link([128, 1120, 138, 1165])
  .area([300, 870, 340, 885, 420, 960, 470, 1010, 532, 1090, 542, 1200, 546, 1290, 535, 1285, 510, 1190, 470, 1085, 400, 985, 330, 910])
  .link([302, 870, 460, 1020, 525, 1120, 541, 1290], 4)
  .link([541, 1300, 546, 1338])
  .link([549, 1350, 549, 1390], 1)
  .link([1065, 885, 1072, 945])
  .link([1088, 1138, 1096, 1210, 1106, 1340], 5)
  .link([1098, 1210, 1104, 1340], 7)
  .link([160, 1468, 202, 1481])
  .link([243, 1484, 325, 1473, 405, 1463, 488, 1448, 612, 1434, 670, 1424, 735, 1415, 802, 1404], 4)
  .link([905, 1390, 980, 1380, 1035, 1372, 1135, 1358], 4)
  .link([1170, 1350, 1260, 1339, 1330, 1329, 1397, 1317], 4);
draw(links, 'rect', { x: 1124, y: 110, width: 8, height: 6, fill: 'none', stroke: '#f00' });

district(628, 561, .5102, .3333)
  .nodes(`160 95 311 c e
    151 112 309 h e
    143 128 305 h e
    152 150 305 c e
    124 168 300 c e
    131 183 298 h s
    125 192 311 c
    115 193 339 h
    105 192 359 h
    95 195 384 h
    85 195 405 h
    75 200 429 h
    65 205 456 h
    53 208 471 c
    46 245 468 h e
    33 280 460 h e
    22 308 453 r e
    11 317 512 c
    1 325 590 r s
    187 328 650 c s
    177 330 689 h
    169 334 718 r
    194 185 809 r e`)
  .row([184, 174, 165, 156, 147, 139, 127, 117, 106], 205, 799, 327, 738, 'e')
  .nodes('97 450 732 c e')
  .row([99, 88, 78, 67, 58, 42], 487, 730, 655, 716)
  .nodes(`109 488 708 c e
    104 858 673 c e
    94 911 668 c e
    84 948 667 c e
    74 985 666 h e
    64 1023 663 h e
    54 1060 657 r e`)
  .row([15, 32, 43, 91, 108, 114], 510, 705, 672, 693, 'e')
  .nodes(`56 1394 160 c s
    50 1372 307 c sw
    41 1346 401 c sw
    26 1319 491 r sw
    18 1296 569 c
    32 1205 668 c e
    30 1240 647 h e
    35 1270 668 h e
    9 1300 647 c e
    10 1325 675 h e
    23 1363 668 c e
    14 1415 688 h e
    4 1453 697 r e`)
  .link([98, 272, 132, 274], 4)
  .link([165, 266, 192, 268], 6)
  .area([185, 265, 194, 265, 245, 430, 222, 410, 205, 420, 190, 425])
  .link([192, 270, 200, 420, 245, 430], 4)
  .link([255, 430, 305, 420, 318, 448])
  .link([290, 420, 295, 445])
  .link([328, 620, 332, 665, 333, 700])
  .link([335, 697, 260, 730, 188, 775], 5)
  .area([330, 685, 338, 705, 195, 780, 185, 765])
  .link([468, 680, 660, 663, 842, 640])
  .link([500, 692, 660, 682, 842, 642])
  .area([475, 672, 665, 655, 660, 685, 510, 697])
  .link([915, 633, 965, 630, 1000, 626, 1056, 621])
  .link([1390, 150, 1379, 245])
  .link([1340, 395, 1325, 450])
  .link([1291, 552, 1286, 572])
  .link([1210, 622, 1282, 617], 5)
  .link([1212, 630, 1320, 642], 4)
  .link([1318, 620, 1370, 640, 1447, 662], 4);

district(-12, 781, .4082, .3333)
  .nodes(`190 622 209 c sw
    180 566 278 r sw
    171 517 335 r sw
    163 461 395 r sw
    154 410 455 r sw
    145 358 512 c sw
    137 307 572 c sw
    129 256 632 r sw`)
  .link([342, 488, 262, 590])
  .link([252, 600, 205, 656]);
```
